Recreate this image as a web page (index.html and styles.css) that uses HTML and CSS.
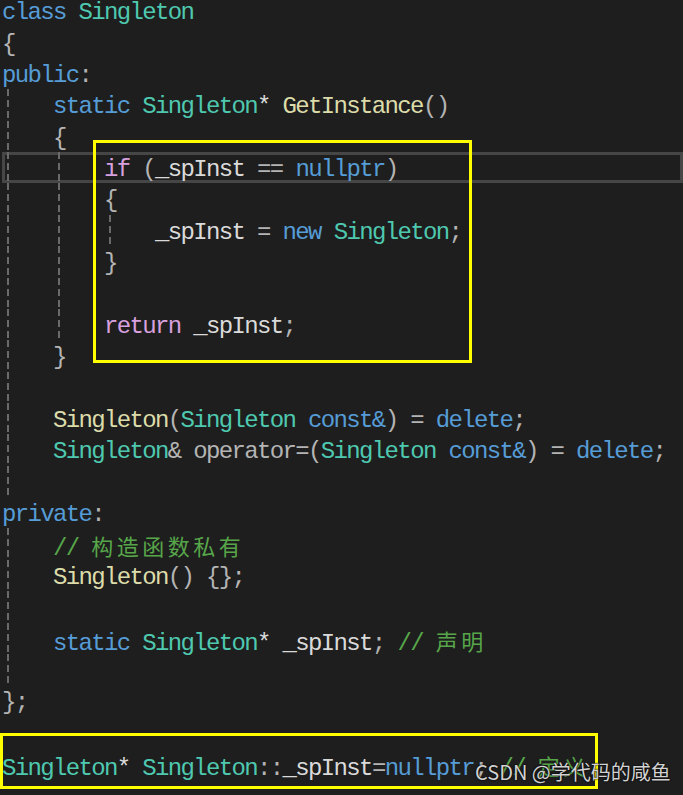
FILE: index.html
```html
<!DOCTYPE html>
<html lang="zh-CN">
<head>
    <meta charset="UTF-8">
    <meta name="viewport" content="width=device-width, initial-scale=1.0">
    <title>Singleton</title>
    <link rel="stylesheet" href="styles.css">
</head>
<body>
    <div class="editor">
        <div class="code">
            <div class="line"><span class="kw">class</span> <span class="ty">Singleton</span></div>
            <div class="line"><span class="p">{</span></div>
            <div class="line"><span class="kw">public</span><span class="p">:</span></div>
            <div class="line"><span class="g">    </span><span class="kw">static</span> <span class="ty">Singleton</span>* <span class="fn">GetInstance</span><span class="p">()</span></div>
            <div class="line"><span class="g">    </span><span class="p">{</span></div>
            <div class="line cur"><span class="g">    </span><span class="g">    </span><span class="ct">if</span> <span class="p">(</span>_spInst <span class="p">==</span> <span class="kw">nullptr</span><span class="p">)</span></div>
            <div class="line"><span class="g">    </span><span class="g">    </span><span class="p">{</span></div>
            <div class="line"><span class="g">    </span><span class="g">    </span><span class="g">    </span>_spInst <span class="p">=</span> <span class="kw">new</span> <span class="ty">Singleton</span><span class="p">;</span></div>
            <div class="line"><span class="g">    </span><span class="g">    </span><span class="p">}</span></div>
            <div class="line"><span class="g">    </span><span class="g">    </span></div>
            <div class="line"><span class="g">    </span><span class="g">    </span><span class="ct">return</span> _spInst<span class="p">;</span></div>
            <div class="line"><span class="g">    </span><span class="p">}</span></div>
            <div class="line"><span class="g">    </span></div>
            <div class="line"><span class="g">    </span><span class="fn">Singleton</span><span class="p">(</span><span class="ty">Singleton</span> <span class="kw">const&amp;</span><span class="p">)</span> <span class="p">=</span> <span class="kw">delete</span><span class="p">;</span></div>
            <div class="line"><span class="g">    </span><span class="ty">Singleton</span><span class="p">&amp;</span> <span class="p">operator=(</span><span class="ty">Singleton</span> <span class="kw">const&amp;</span><span class="p">)</span> <span class="p">=</span> <span class="kw">delete</span><span class="p">;</span></div>
            <div class="line"><span class="g">    </span></div>
            <div class="line"><span class="kw">private</span><span class="p">:</span></div>
            <div class="line"><span class="g">    </span><span class="cm">// <span class="zh">构造函数私有</span></span></div>
            <div class="line"><span class="g">    </span><span class="fn">Singleton</span><span class="p">() {};</span></div>
            <div class="line"><span class="g">    </span></div>
            <div class="line"><span class="g">    </span><span class="kw">static</span> <span class="ty">Singleton</span>* _spInst<span class="p">;</span> <span class="cm">// <span class="zh">声明</span></span></div>
            <div class="line"><span class="g">    </span></div>
            <div class="line"><span class="p">};</span></div>
            <div class="line"></div>
            <div class="line"><span class="ty">Singleton</span>* <span class="ty">Singleton</span><span class="p">::</span>_spInst<span class="p">=</span><span class="kw">nullptr</span><span class="p">;</span> <span class="cm">// <span class="zh">定义</span></span></div>
        </div>

        <!-- 标注框 -->
        <div class="mark mark-get"></div>
        <div class="mark mark-def"></div>
        <div class="watermark">CSDN @学代码的咸鱼</div>
    </div>
</body>
</html>
```

FILE: styles.css
```css
body{
    margin: 0;
    background-color: #1e1e1e;
    overflow: hidden;
}
.editor{
    display: flow-root;
    position: relative;
    width: 683px;
    height: 795px;
    overflow: hidden;
    font-family: "Liberation Mono", "Noto Sans CJK SC", monospace;
    font-size: 24px;
    letter-spacing: -1.65px;
    color: #dadada;
}
.code{
    margin-top: -4.7px;
    padding-left: 2px;
}
.line{
    box-sizing: border-box;
    height: 31.36px;
    padding-top: 2px;
    line-height: 31.36px;
    white-space: pre;
}
.line.cur{
    box-shadow: inset 0 0 0 3px #464646;
}
/* 缩进参考线 */
.g{
    display: inline-block;
    vertical-align: top;
    height: 31.36px;
    margin-top: -2px;
    background: repeating-linear-gradient(to bottom, #6a6a6a 0 7px, transparent 7px 11px) 5px 0 / 2px 100% no-repeat;
}
.kw{
    color: #569cd6;
}
.ty{
    color: #4ec9b0;
}
.fn{
    color: #dcdcaa;
}
.ct{
    color: #d8a0df;
}
.p{
    color: #b4b4b4;
}
.cm{
    color: #57a64a;
}
.zh{
    font-family: "Noto Sans CJK SC", sans-serif;
    font-size: 22px;
    letter-spacing: 3.5px;
}
.mark{
    position: absolute;
    box-sizing: border-box;
    border: 3px solid #ffff00;
}
.mark-get{
    left: 93px;
    top: 140px;
    width: 379px;
    height: 223px;
}
.mark-def{
    left: 0;
    top: 733px;
    width: 598px;
    height: 56px;
}
.watermark{
    position: absolute;
    left: 475px;
    top: 759px;
    font-family: "Noto Sans CJK SC", sans-serif;
    font-size: 20px;
    line-height: 26px;
    letter-spacing: 0;
    color: #d2d2d2;
    text-shadow: 0 0 2px #000, 0 0 1px #000;
}
```
